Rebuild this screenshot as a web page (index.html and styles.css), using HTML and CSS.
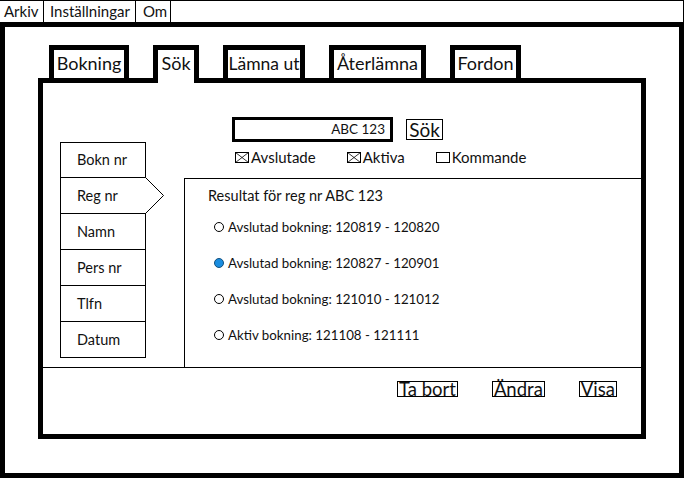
FILE: index.html
```html
<!DOCTYPE html>
<html lang="sv">
<head>
<meta charset="utf-8">
<title>Sök bokning</title>
<link rel="stylesheet" href="styles.css">
</head>
<body>
<div class="menubar">
  <div class="menu-item">Arkiv</div>
  <div class="menu-item">Inställningar</div>
  <div class="menu-item">Om</div>
</div>
<div class="frame">
  <div class="tabs">
    <div class="tab tab-bokning">Bokning</div>
    <div class="tab tab-sok tab-active">Sök</div>
    <div class="tab tab-lamna">Lämna ut</div>
    <div class="tab tab-ater">Återlämna</div>
    <div class="tab tab-fordon">Fordon</div>
  </div>
  <div class="panel">
    <div class="panel-main">
      <div class="sidebar">
        <div class="side-list">
          <div class="side-item">Bokn nr</div>
          <div class="side-item side-item-active">Reg nr
            <svg class="chevron" width="20" height="37" viewBox="0 0 20 37"><polyline points="0.5,0.5 18.5,18.5 0.5,36.5" fill="#fff" stroke="#000" stroke-width="1"/></svg>
          </div>
          <div class="side-item">Namn</div>
          <div class="side-item">Pers nr</div>
          <div class="side-item">Tlfn</div>
          <div class="side-item">Datum</div>
        </div>
      </div>
      <div class="search">
        <div class="search-row">
          <div class="search-input">ABC 123</div>
          <div class="btn btn-search">Sök</div>
        </div>
        <div class="checks">
          <div class="check"><svg class="box" width="14" height="11" viewBox="0 0 14 11"><rect x="0.5" y="0.5" width="13" height="10" fill="#fff" stroke="#000"/><path d="M0.5 0.5 L13.5 10.5 M13.5 0.5 L0.5 10.5" stroke="#000" stroke-width="0.8"/></svg>Avslutade</div>
          <div class="check"><svg class="box" width="14" height="11" viewBox="0 0 14 11"><rect x="0.5" y="0.5" width="13" height="10" fill="#fff" stroke="#000"/><path d="M0.5 0.5 L13.5 10.5 M13.5 0.5 L0.5 10.5" stroke="#000" stroke-width="0.8"/></svg>Aktiva</div>
          <div class="check"><svg class="box" width="14" height="11" viewBox="0 0 14 11"><rect x="0.5" y="0.5" width="13" height="10" fill="#fff" stroke="#000"/></svg>Kommande</div>
        </div>
      </div>
      <div class="results">
        <div class="results-title">Resultat för reg nr ABC 123</div>
        <div class="result"><span class="radio"></span>Avslutad bokning: 120819 - 120820</div>
        <div class="result"><span class="radio radio-on"></span>Avslutad bokning: 120827 - 120901</div>
        <div class="result"><span class="radio"></span>Avslutad bokning: 121010 - 121012</div>
        <div class="result"><span class="radio"></span>Aktiv bokning: 121108 - 121111</div>
      </div>
    </div>
    <div class="panel-footer">
      <div class="btn btn-action">Ta bort</div>
      <div class="btn btn-action">Ändra</div>
      <div class="btn btn-action">Visa</div>
    </div>
  </div>
</div>
</body>
</html>
```

FILE: styles.css
```css
* { box-sizing: border-box; }
html, body {
  margin: 0;
  padding: 0;
  background: #fff;
}
body {
  width: 684px;
  height: 478px;
  overflow: hidden;
  font-family: "Lato", "Liberation Sans", sans-serif;
  color: #111;
}
.menubar {
  display: flex;
  height: 22px;
  border-top: 1px solid #000;
  border-right: 1px solid #000;
}
.menu-item {
  border-right: 1px solid #000;
  padding: 0 0 0 4px;
  font-size: 15px;
  line-height: 21px;
  white-space: nowrap;
}
.menu-item:nth-child(1) { width: 44px; }
.menu-item:nth-child(2) { width: 92px; padding-left: 6px; }
.menu-item:nth-child(3) { width: 35px; padding-left: 7px; }

.frame {
  height: 456px;
  border: 5px solid #000;
  padding: 18px 33px 34px 33px;
  display: flex;
  flex-direction: column;
}
.tabs {
  display: flex;
  align-items: flex-start;
  gap: 24px;
  padding-left: 11px;
  height: 33px;
}
.tab {
  height: 33px;
  border: 5px solid #000;
  border-bottom: none;
  padding: 0;
  text-align: center;
  white-space: nowrap;
  font-size: 18px;
  line-height: 27px;
  background: #fff;
}
.tab-bokning { width: 80px; }
.tab-sok { width: 46px; }
.tab-lamna { width: 82px; font-size: 17.5px; }
.tab-ater { width: 97px; }
.tab-fordon { width: 71px; }
.tab-active {
  height: 38px;
  margin-bottom: -5px;
  position: relative;
  z-index: 1;
}
.panel {
  height: 361px;
  border: 5px solid #000;
  display: flex;
  flex-direction: column;
}
.panel-main {
  height: 285px;
  border-bottom: 1px solid #000;
  display: grid;
  grid-template-columns: 141px 1fr;
  grid-template-rows: 95px 1fr;
}
.sidebar {
  grid-row: 1 / 3;
  grid-column: 1;
  padding: 59px 0 0 17px;
}
.side-item {
  position: relative;
  width: 86px;
  height: 37px;
  border: 1px solid #000;
  margin-top: -1px;
  padding-left: 16px;
  font-size: 14.5px;
  line-height: 35px;
  background: #fff;
}
.side-item:first-child { margin-top: 0; height: 36px; line-height: 34px; }
.side-item-active { border-right: none; }
.chevron {
  position: absolute;
  top: -1px;
  left: 84px;
  display: block;
}
.search {
  grid-row: 1;
  grid-column: 2;
  padding: 34px 0 0 48px;
}
.search-row {
  display: flex;
  align-items: center;
  gap: 13px;
}
.search-input {
  width: 161px;
  height: 25px;
  border: 3px solid #000;
  text-align: right;
  padding-right: 5px;
  font-size: 13.5px;
  line-height: 19px;
}
.btn {
  border: 1px solid #000;
  background: #fff;
  white-space: nowrap;
}
.btn-search {
  width: 37px;
  height: 21px;
  font-size: 19px;
  line-height: 19px;
  text-align: center;
}
.checks {
  display: flex;
  gap: 31px;
  margin-top: 8px;
  padding-left: 3px;
}
.check {
  display: flex;
  align-items: center;
  font-size: 15px;
  line-height: 15px;
}
.box {
  display: block;
  margin-right: 2px;
}
.results {
  grid-row: 2;
  grid-column: 2;
  border-top: 1px solid #000;
  border-left: 1px solid #000;
  padding: 7px 0 0 23px;
}
.results-title {
  font-size: 14.5px;
  line-height: 20px;
  margin-bottom: 11px;
}
.result {
  display: flex;
  align-items: center;
  gap: 4px;
  margin-left: 6px;
  height: 20px;
  margin-bottom: 16px;
  font-size: 13.3px;
  line-height: 20px;
}
.radio {
  flex: none;
  width: 10px;
  height: 10px;
  border: 1px solid #000;
  border-radius: 50%;
  background: #fff;
}
.radio-on {
  background: #1a8de0;
  border-color: #13507e;
}
.panel-footer {
  display: flex;
  justify-content: flex-end;
  gap: 34px;
  padding: 13px 24px 0 0;
}
.btn-action {
  height: 16px;
  font-size: 18.5px;
  line-height: 14px;
  padding: 0 1px;
}
```
